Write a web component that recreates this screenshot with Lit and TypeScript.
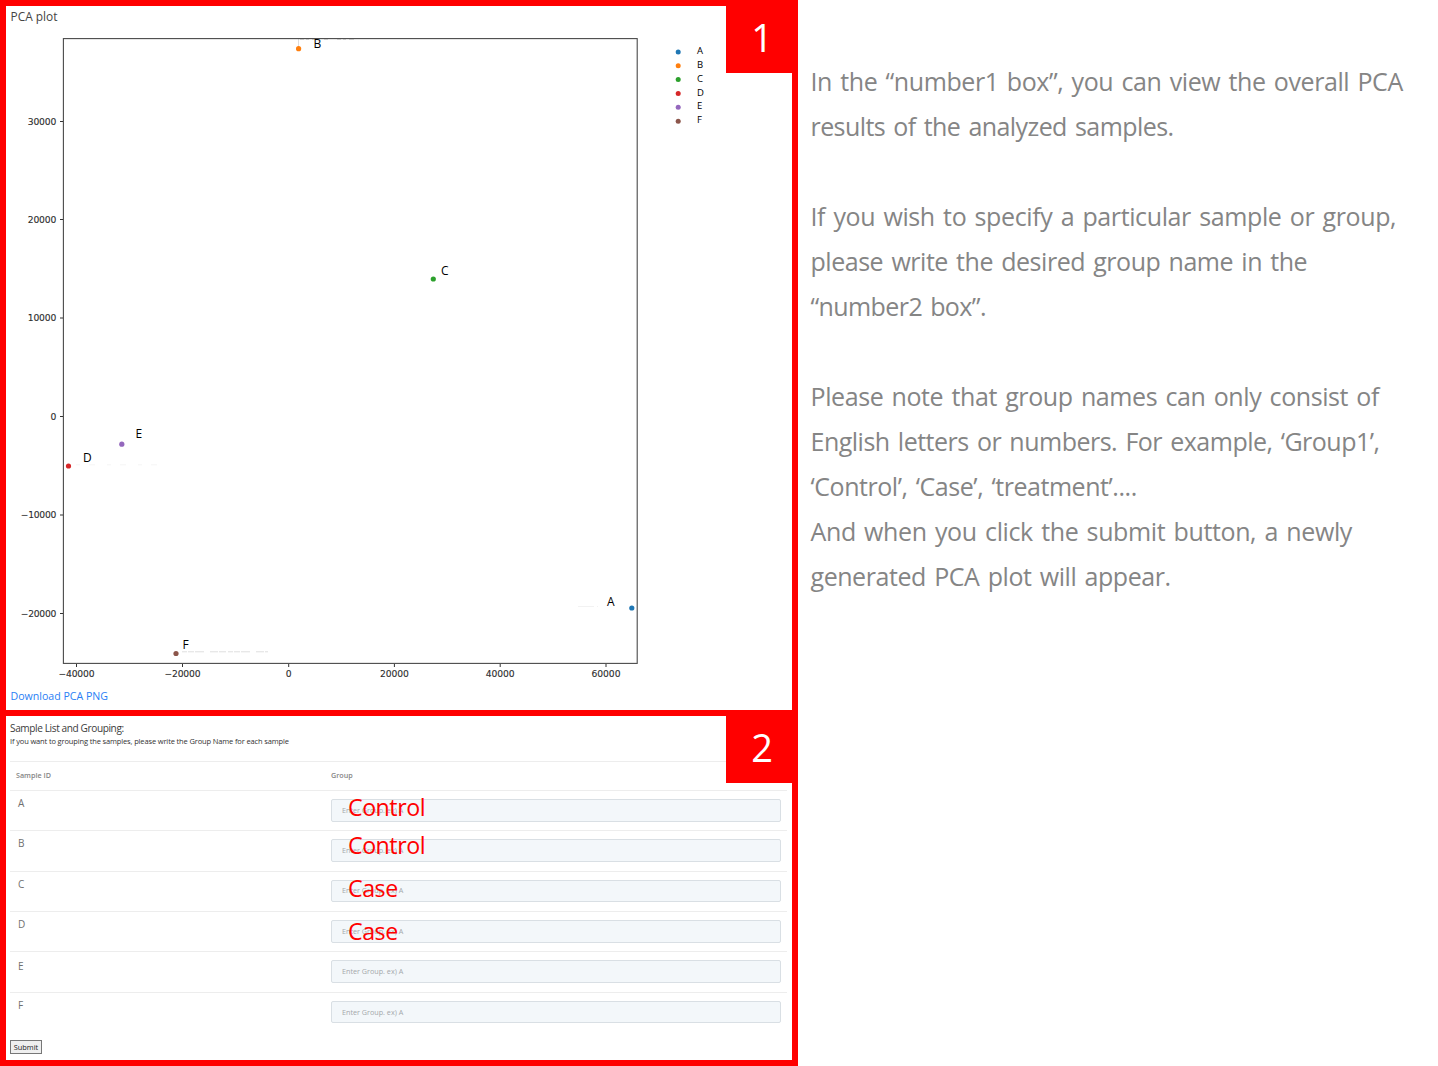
import { LitElement, html, css, svg } from "lit";
import { customElement } from "lit/decorators.js";

interface Sample {
  id: string;
  color: string;
  x: number;
  y: number;
  labelX: number;
  labelY: number;
  legendY: number;
}

const SAMPLES: Sample[] = [
  { id: "A", color: "#1f77b4", x: 631.8, y: 608, labelX: 607, labelY: 606, legendY: 54 },
  { id: "B", color: "#ff7f0e", x: 298.6, y: 48.7, labelX: 313.6, labelY: 48, legendY: 68 },
  { id: "C", color: "#2ca02c", x: 433.3, y: 279, labelX: 441, labelY: 275, legendY: 82 },
  { id: "D", color: "#d62728", x: 68.5, y: 466, labelX: 83, labelY: 462, legendY: 96 },
  { id: "E", color: "#9467bd", x: 121.8, y: 444.2, labelX: 135.5, labelY: 438, legendY: 109 },
  { id: "F", color: "#8c564b", x: 176, y: 653.5, labelX: 182.5, labelY: 649, legendY: 123 },
];

const Y_TICKS: [string, number, number][] = [
  ["30000", 121.5, 28.5],
  ["20000", 219.5, 28.5],
  ["10000", 318, 28.5],
  ["0", 416.5, 5.7],
  ["−10000", 515, 35.5],
  ["−20000", 613.5, 35.5],
];

const X_TICKS: [string, number, number][] = [
  ["−40000", 76.5, 36],
  ["−20000", 182.5, 36],
  ["0", 288.7, 5.7],
  ["20000", 394.4, 29],
  ["40000", 500.2, 29],
  ["60000", 606, 29],
];

/** Faint specks left beside some of the points: x, y, dash pattern, length, colour. */
const TRACES: [number, number, string, number, string][] = [
  [300, 39.5, "4 2 3 3 5 7 4 9", 58, "#dcdcdc"],
  [182, 651.8, "5 1 6 1 9 6 8 1 7 2", 86, "#dfdfdf"],
  [76, 464.8, "4 9 6 12", 82, "#f5f5f5"],
  [578, 606.5, "16 3", 20, "#f2f2f2"],
];

@customElement("pca-plot")
class PcaPlot extends LitElement {
  static styles = css`
    :host { display: block; }
    .plot { display: block; width: 786px; height: 656px; }
    .frame { fill: none; stroke: #4a4a4a; stroke-width: 1.1; }
    .tick { stroke: #333; stroke-width: 1; }
    .tick-label {
      font: 9.2px "DejaVu Sans", sans-serif;
      fill: #2b2b2b;
      stroke: #2b2b2b;
      stroke-width: 0.1;
    }
    .end { text-anchor: end; }
    .mid { text-anchor: middle; }
    .name { font: 12px "Open Sans", "Noto Sans", sans-serif; fill: #000; }
    .key { font: 9.5px "Open Sans", "Noto Sans", sans-serif; fill: #000; }
  `;

  render() {
    return html`<svg class="plot" viewBox="6 28 786 656">
      ${TRACES.map(([x, y, dash, len, color]) => svg`
        <line x1=${x} y1=${y} x2=${x + len} y2=${y} stroke=${color} stroke-dasharray=${dash}></line>`)}
      <line x1="298.5" y1="39" x2="298.5" y2="46" stroke="#dedede"></line>
      <rect class="frame" x="63.4" y="38.6" width="573.8" height="624.8"></rect>
      ${Y_TICKS.map(([label, y, len]) => svg`
        <line class="tick" x1="60" y1=${y} x2="63" y2=${y}></line>
        <text class="tick-label end" x="56.3" y=${y + 3.2} textLength=${len}>${label}</text>`)}
      ${X_TICKS.map(([label, x, len]) => svg`
        <line class="tick" x1=${x} y1="664" x2=${x} y2="667"></line>
        <text class="tick-label mid" x=${x} y="677.2" textLength=${len}>${label}</text>`)}
      ${SAMPLES.map((s, i) => svg`
        <circle cx=${s.x} cy=${s.y} r="2.6" fill=${s.color}></circle>
        <text class="name" x=${s.labelX} y=${s.labelY}>${s.id}</text>
        <circle cx="678.2" cy=${51.9 + i * 13.85} r="2.5" fill=${s.color}></circle>
        <text class="key" x="697" y=${s.legendY}>${s.id}</text>`)}
    </svg>`;
  }
}

/** Vertical centres of the sample letter and of the red annotation, from the row's top. */
const ROWS: { id: string; idY: number; note?: string; noteY?: number }[] = [
  { id: "A", idY: 13, note: "Control", noteY: 16 },
  { id: "B", idY: 12.6, note: "Control", noteY: 14 },
  { id: "C", idY: 13, note: "Case", noteY: 16 },
  { id: "D", idY: 13, note: "Case", noteY: 19 },
  { id: "E", idY: 15 },
  { id: "F", idY: 13 },
];

@customElement("group-table")
class GroupTable extends LitElement {
  static styles = css`
    :host { display: block; }
    .head, .row {
      display: grid;
      grid-template-columns: 321px 450px;
      width: 777px;
      box-sizing: border-box;
      border-top: 1px solid #ededed;
    }
    .head {
      height: 29px;
      padding-bottom: 2px;
      align-items: center;
      font-size: 7.2px;
      font-weight: 600;
      color: #858585;
    }
    .first { padding-left: 6px; }
    .row { height: 40.35px; position: relative; align-items: start; }
    .id {
      padding-left: 8px;
      font-size: 10px;
      line-height: 12px;
      color: #707070;
    }
    .field {
      box-sizing: border-box;
      width: 450px;
      height: 22.6px;
      margin: 8px 0 0;
      padding: 0 10px 1px;
      border: 1px solid #d9dfe4;
      border-radius: 2px;
      background: #f3f7fa;
      font: 7.2px "Open Sans", sans-serif;
      outline: none;
    }
    .field::placeholder { color: #a4a8ab; opacity: 1; }
    .note {
      position: absolute;
      left: 338px;
      line-height: 30px;
      font-size: 23.2px;
      letter-spacing: -0.47px;
      color: #f00;
    }
  `;

  render() {
    return html`
      <div class="head"><span class="first">Sample ID</span><span>Group</span></div>
      ${ROWS.map((r) => html`<div class="row">
        <span class="id" style="margin-top:${r.idY - 7}px">${r.id}</span>
        <input class="field" placeholder="Enter Group. ex) A" />
        ${r.note ? html`<span class="note" style="top:${r.noteY! - 15}px">${r.note}</span>` : null}
      </div>`)}
    `;
  }
}

/** Guide lines with their letter spacing in px. */
const GUIDE: [string, number][] = [
  ["In the “number1 box”, you can view the overall PCA", -0.42],
  ["results of the analyzed samples.", -0.57],
  ["", 0],
  ["If you wish to specify a particular sample or group,", -0.39],
  ["please write the desired group name in the", -0.47],
  ["“number2 box”.", -0.6],
  ["", 0],
  ["Please note that group names can only consist of", -0.41],
  ["English letters or numbers. For example, ‘Group1’,", -0.5],
  ["‘Control’, ‘Case’, ‘treatment’....", -0.45],
  ["And when you click the submit button, a newly", -0.38],
  ["generated PCA plot will appear.", -0.44],
];

@customElement("app-root")
class AppRoot extends LitElement {
  static styles = css`
    :host {
      display: block;
      font-family: "Open Sans", "Noto Sans", sans-serif;
      background: #fff;
    }
    .page { display: flex; width: 1438px; height: 1066px; overflow: hidden; }
    .boxes {
      display: flex;
      flex-direction: column;
      gap: 6px;
      box-sizing: border-box;
      width: 798px;
      padding: 6px;
      background: #f00;
    }
    .panel { position: relative; background: #fff; }
    .one { height: 704px; }
    .two { height: 344px; box-sizing: border-box; padding-left: 4px; }
    .badge {
      position: absolute;
      top: 0;
      right: 0;
      width: 66px;
      height: 67px;
      padding-left: 6px;
      box-sizing: border-box;
      background: #f00;
      color: #fff;
      font-size: 38px;
      line-height: 62px;
      text-align: center;
    }
    .title { height: 22px; padding-left: 4.5px; font-size: 11.9px; line-height: 21px; color: #444; }
    .link { display: block; padding-left: 4.5px; font-size: 10.6px; line-height: 25px; color: #2a80f5; text-decoration: none; }
    .subtitle { padding-top: 5px; font-size: 10.1px; line-height: 14px; letter-spacing: -0.4px; color: #3c3c3c; }
    .hint { height: 26px; font-size: 7.5px; line-height: 13px; letter-spacing: -0.14px; color: #333; }
    .submit {
      display: block;
      box-sizing: border-box;
      width: 32px;
      height: 14px;
      margin-top: 8px;
      padding: 0;
      border: 1px solid #777;
      border-radius: 0;
      background: #efefef;
      font: 7.4px/10px "Open Sans", sans-serif;
      color: #222;
    }
    .guide { padding: 59px 0 0 12.5px; font-size: 25px; word-spacing: 2.2px; color: #858585; }
    .line { height: 45px; line-height: 45px; white-space: nowrap; }
  `;

  render() {
    return html`<div class="page">
      <div class="boxes">
        <section class="panel one">
          <div class="title">PCA plot</div>
          <pca-plot></pca-plot>
          <a class="link">Download PCA PNG</a>
          <div class="badge">1</div>
        </section>
        <section class="panel two">
          <div class="subtitle">Sample List and Grouping:</div>
          <div class="hint">If you want to grouping the samples, please write the Group Name for each sample</div>
          <group-table></group-table>
          <button class="submit">Submit</button>
          <div class="badge">2</div>
        </section>
      </div>
      <div class="guide">
        ${GUIDE.map(([text, spacing]) => html`<div class="line" style="letter-spacing:${spacing}px">${text}</div>`)}
      </div>
    </div>`;
  }
}
